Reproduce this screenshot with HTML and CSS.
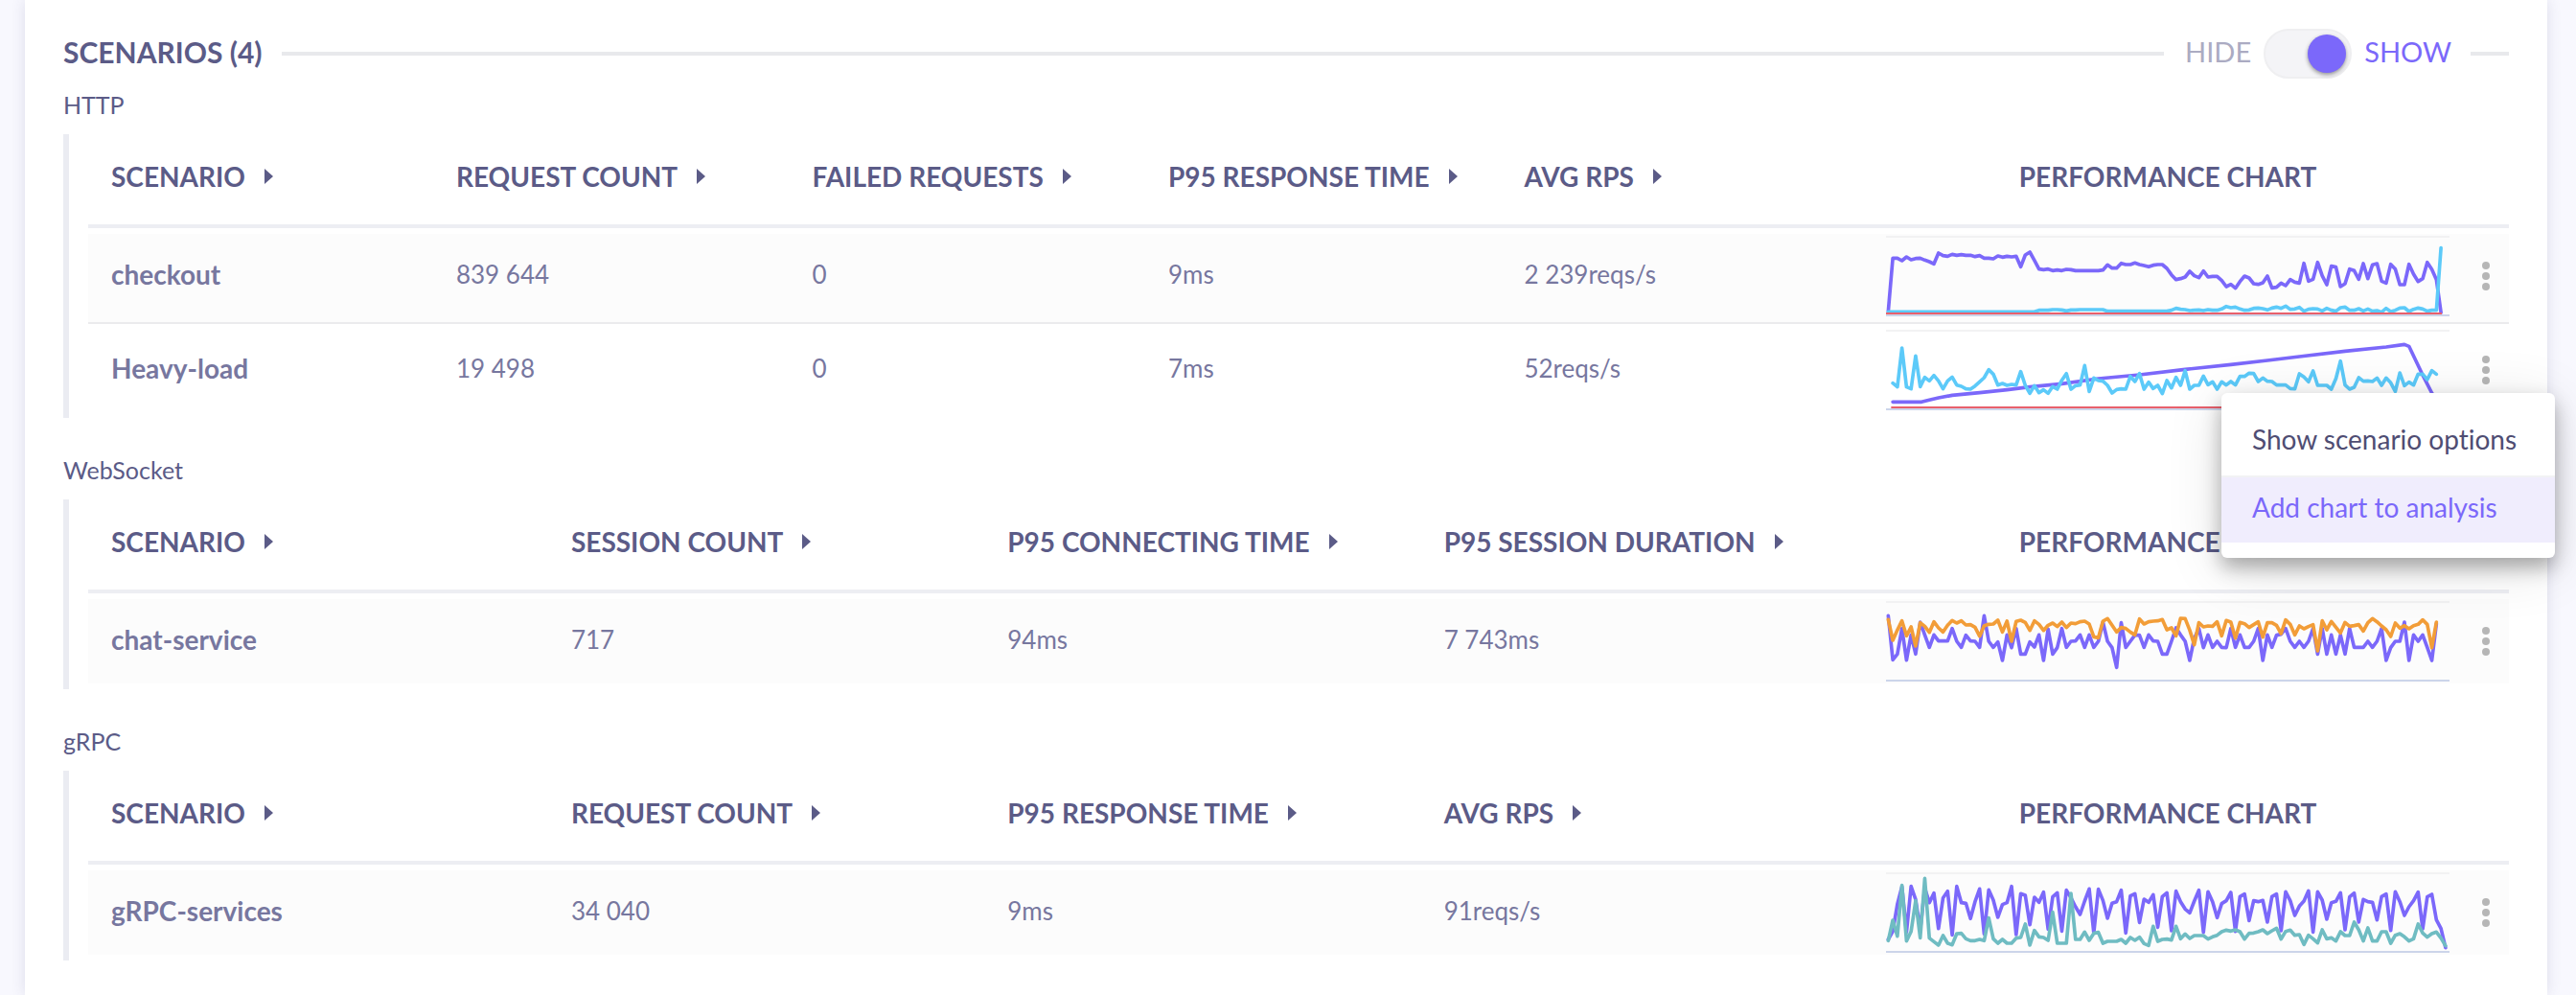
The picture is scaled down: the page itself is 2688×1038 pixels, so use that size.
FILE: index.html
```html
<!DOCTYPE html>
<html lang="en">
<head>
<meta charset="utf-8">
<title>Scenarios</title>
<link rel="stylesheet" href="styles.css">
</head>
<body>
<main class="panel">
  <header class="panel-head">
    <h1 class="panel-title">SCENARIOS (4)</h1>
    <span class="rule rule-grow"></span>
    <label class="switch">
      <span class="switch-text switch-off">HIDE</span>
      <input class="switch-input" type="checkbox" role="switch" checked>
      <span class="switch-text switch-on">SHOW</span>
    </label>
    <span class="rule rule-end"></span>
  </header>

  <section class="group">
    <h2 class="group-title">HTTP</h2>
    <div class="group-body">
      <table class="grid grid-five">
        <thead>
          <tr>
            <th class="col-name"><button class="sort" type="button">SCENARIO</button></th>
            <th><button class="sort" type="button">REQUEST COUNT</button></th>
            <th><button class="sort" type="button">FAILED REQUESTS</button></th>
            <th><button class="sort" type="button">P95 RESPONSE TIME</button></th>
            <th><button class="sort" type="button">AVG RPS</button></th>
            <th class="col-chart">PERFORMANCE CHART</th>
            <th class="col-more"></th>
          </tr>
        </thead>
        <tbody>
          <tr>
            <td class="name">checkout</td>
            <td>839 644</td>
            <td>0</td>
            <td>9ms</td>
            <td>2 239reqs/s</td>
            <td class="chart-cell"><svg class="chart" data-chart="checkout" viewBox="0 0 1764 264" role="img" aria-label="checkout performance"></svg></td>
            <td class="more-cell">
              <button class="more" type="button" aria-label="checkout actions"><svg width="10" height="32" viewBox="0 0 10 32"><circle cx="5" cy="5" r="4"/><circle cx="5" cy="16" r="4"/><circle cx="5" cy="27" r="4"/></svg></button>
            </td>
          </tr>
          <tr>
            <td class="name">Heavy-load</td>
            <td>19 498</td>
            <td>0</td>
            <td>7ms</td>
            <td>52reqs/s</td>
            <td class="chart-cell"><svg class="chart" data-chart="heavy" viewBox="0 0 1764 264" role="img" aria-label="Heavy-load performance"></svg></td>
            <td class="more-cell">
              <button class="more" type="button" aria-label="Heavy-load actions"><svg width="10" height="32" viewBox="0 0 10 32"><circle cx="5" cy="5" r="4"/><circle cx="5" cy="16" r="4"/><circle cx="5" cy="27" r="4"/></svg></button>
              <div class="menu" role="menu">
                <button class="menu-item" type="button" role="menuitem">Show scenario options</button>
                <button class="menu-item menu-item-active" type="button" role="menuitem">Add chart to analysis</button>
              </div>
            </td>
          </tr>
        </tbody>
      </table>
    </div>
  </section>

  <section class="group">
    <h2 class="group-title">WebSocket</h2>
    <div class="group-body">
      <table class="grid">
        <thead>
          <tr>
            <th class="col-name"><button class="sort" type="button">SCENARIO</button></th>
            <th><button class="sort" type="button">SESSION COUNT</button></th>
            <th><button class="sort" type="button">P95 CONNECTING TIME</button></th>
            <th><button class="sort" type="button">P95 SESSION DURATION</button></th>
            <th class="col-chart">PERFORMANCE CHART</th>
            <th class="col-more"></th>
          </tr>
        </thead>
        <tbody>
          <tr>
            <td class="name">chat-service</td>
            <td>717</td>
            <td>94ms</td>
            <td>7 743ms</td>
            <td class="chart-cell"><svg class="chart" data-chart="chat" viewBox="0 0 1764 264" role="img" aria-label="chat-service performance"></svg></td>
            <td class="more-cell">
              <button class="more" type="button" aria-label="chat-service actions"><svg width="10" height="32" viewBox="0 0 10 32"><circle cx="5" cy="5" r="4"/><circle cx="5" cy="16" r="4"/><circle cx="5" cy="27" r="4"/></svg></button>
            </td>
          </tr>
        </tbody>
      </table>
    </div>
  </section>

  <section class="group">
    <h2 class="group-title">gRPC</h2>
    <div class="group-body">
      <table class="grid">
        <thead>
          <tr>
            <th class="col-name"><button class="sort" type="button">SCENARIO</button></th>
            <th><button class="sort" type="button">REQUEST COUNT</button></th>
            <th><button class="sort" type="button">P95 RESPONSE TIME</button></th>
            <th><button class="sort" type="button">AVG RPS</button></th>
            <th class="col-chart">PERFORMANCE CHART</th>
            <th class="col-more"></th>
          </tr>
        </thead>
        <tbody>
          <tr>
            <td class="name">gRPC-services</td>
            <td>34 040</td>
            <td>9ms</td>
            <td>91reqs/s</td>
            <td class="chart-cell"><svg class="chart" data-chart="grpc" viewBox="0 0 1764 264" role="img" aria-label="gRPC-services performance"></svg></td>
            <td class="more-cell">
              <button class="more" type="button" aria-label="gRPC-services actions"><svg width="10" height="32" viewBox="0 0 10 32"><circle cx="5" cy="5" r="4"/><circle cx="5" cy="16" r="4"/><circle cx="5" cy="27" r="4"/></svg></button>
            </td>
          </tr>
        </tbody>
      </table>
    </div>
  </section>
</main>
<script src="charts.js"></script>
</body>
</html>
```
FILE: styles.css
```css
* {
  box-sizing: border-box;
}

body {
  margin: 0;
  padding: 0 30px 0 26px;
  background: #f8f8fe;
  color: #5b5b87;
  font-family: Lato, "Open Sans", sans-serif;
  font-size: 26px;
  font-variant-ligatures: none;
  line-height: 32px;
}

button {
  margin: 0;
  padding: 0;
  border: 0;
  background: none;
  color: inherit;
  font: inherit;
  font-variant-ligatures: none;
  cursor: pointer;
}

.panel {
  min-height: 100vh;
  padding: 30px 40px 36px;
  background: #fff;
  box-shadow: 0 0 14px rgba(60, 60, 110, 0.14);
}

.panel-head {
  display: flex;
  align-items: center;
}

.panel-title {
  margin: 0;
  padding-bottom: 4px;
  font-size: 30px;
  font-weight: 700;
}

.rule {
  height: 4px;
  background: #e8e9ec;
}

.rule-grow {
  flex: 1;
  margin: 0 22px 0 20px;
}

.rule-end {
  width: 40px;
  margin-left: 20px;
}

.switch {
  display: flex;
  align-items: center;
  gap: 13px;
  font-size: 29px;
  cursor: pointer;
}

.switch-text {
  padding-bottom: 4px;
}

.switch-off {
  color: #ababc2;
}

.switch-on {
  color: #7b68fa;
}

.switch-input {
  appearance: none;
  display: flex;
  align-items: center;
  justify-content: flex-end;
  width: 92px;
  height: 52px;
  margin: 0;
  padding: 0 4px;
  border: 2px solid #efeff1;
  border-radius: 26px;
  background: #f4f4f7;
}

.switch-input::before {
  content: "";
  width: 40px;
  height: 40px;
  border-radius: 50%;
  background: #7b68fa;
  box-shadow: 0 2px 4px rgba(0, 0, 0, 0.4);
}

.group {
  margin-top: 38px;
}

.panel-head + .group {
  margin-top: 11px;
}

.group-title {
  margin: 0 0 15px;
  font-size: 25px;
  font-weight: 400;
}

.group-body {
  padding: 0 0 6px 20px;
  border-left: 6px solid #ebecf2;
}

.grid {
  width: 100%;
  table-layout: fixed;
  border-collapse: separate;
  border-spacing: 0;
}

.grid th {
  height: 98px;
  padding: 28px 0 0 24px;
  border-bottom: 4px solid #edeef3;
  font-size: 28px;
  font-weight: 700;
  text-align: left;
  vertical-align: top;
  white-space: nowrap;
}

.grid .col-name {
  width: 19%;
}

.grid-five .col-name {
  width: 14.25%;
}

.grid .col-chart {
  width: 618px;
  padding-left: 30px;
  text-align: center;
}

.grid .col-more {
  width: 62px;
}

.sort {
  display: inline-flex;
  align-items: center;
  gap: 20px;
}

.sort::after {
  content: "";
  border: 8px solid transparent;
  border-right: 0;
  border-left: 9px solid #5b5b87;
}

.grid td {
  height: 94px;
  padding: 26px 0 0 24px;
  border-top: 6px solid #fff;
  background: #fcfcfc;
  color: #77779f;
  vertical-align: top;
}

.grid tr:not(:last-child) td {
  height: 100px;
  border-bottom: 2px solid #ebebed;
}

.grid tr + tr td {
  height: 92px;
  border-top-width: 4px;
  background: #fff;
}

.grid .name {
  font-size: 28px;
  font-weight: 700;
}

.grid .chart-cell {
  padding: 0 0 0 30px;
}

.chart {
  display: block;
  width: 588px;
  height: 88px;
}

.chart polyline {
  fill: none;
  stroke-width: 11;
  stroke-linecap: round;
  stroke-linejoin: round;
}

.grid .more-cell {
  position: relative;
  padding: 28px 0 0 33px;
}

.more {
  display: block;
}

.more svg {
  display: block;
  fill: #b6b6b6;
}

.menu {
  position: absolute;
  z-index: 1;
  top: 68px;
  right: -48px;
  width: 348px;
  padding: 16px 0;
  border-radius: 6px;
  background: #fff;
  box-shadow: 0 10px 20px rgba(0, 0, 0, 0.3), 0 10px 60px rgba(0, 0, 0, 0.12);
}

.menu-item {
  display: block;
  width: 100%;
  height: 70px;
  padding: 0 0 6px 32px;
  color: #4f4d73;
  font-size: 28px;
  text-align: left;
  white-space: nowrap;
}

.menu-item-active {
  border-top: 2px solid #f2f2f4;
  background: #f0edfd;
  color: #7b68fa;
}
```
FILE: charts.js
```js
// Each line has its samples at a constant step; a [index, y] pair places a sparse sample.
const STEP = 14.3;
const START = 7;

const charts = {
  checkout: {
    top: 42, errors: [0, 1740],
    lines: [
      { color: "#7b68fa", first: 0, values: [285,118,118,126,114,123,119,118,124,129,136,102,110,112,106,109,107,109,109,113,110,118,118,120,111,115,112,114,112,145,108,99,125,152,154,152,157,155,157,153,154,157,157,157,157,157,157,155,139,149,149,134,138,138,133,138,141,145,140,138,138,150,170,185,182,177,159,173,179,158,177,175,175,188,207,200,212,191,174,180,198,200,195,174,211,209,196,204,185,193,196,134,190,184,131,173,201,143,146,207,198,152,157,184,135,182,139,135,190,196,137,152,201,201,137,168,191,182,131,153,185,288] },
      { color: "#5ccaf9", first: 0, values: [286,[32,286],281,281,281,279,279,280,283,280,280,279,279,279,279,279,279,284,284,[61,284],281,275,278,279,282,281,280,282,279,281,281,277,269,273,271,277,281,280,275,274,276,280,274,271,275,268,278,277,272,284,278,276,277,283,275,281,284,273,271,281,281,276,283,277,284,282,287,275,285,281,274,273,285,278,274,277,284,281,281,86] }
    ]
  },
  heavy: {
    top: 336, errors: [16, 1740],
    lines: [
      { color: "#7b68fa", first: 1, values: [[1,568],[7.3,568],[9,562],[11,555],[14,547],[20,539],[26,530],[31,521],[38,511],[46,495],[55,483],[65,466],[75,451],[83,438],[90,426],[100,409],[109,396],[113,388],[114,394],[116.8,478],[119,540],[120,566]] },
      { color: "#5ccaf9", first: 1, values: [509,521,399,521,527,424,520,491,502,485,502,527,502,490,515,519,527,528,518,505,492,467,481,515,510,516,513,515,473,516,541,517,539,530,541,520,528,500,479,528,517,515,454,535,493,501,503,516,540,529,527,528,488,504,479,528,506,526,516,542,501,524,491,516,470,528,516,516,487,514,505,528,505,515,504,515,488,488,478,479,504,493,503,504,515,515,515,526,527,480,490,505,471,516,516,516,528,495,440,515,528,522,492,503,502,504,493,516,493,508,535,477,517,506,515,481,481,498,470,481] }
    ]
  },
  chat: {
    top: 18,
    lines: [
      { color: "#7b68fa", first: 0, values: [70,208,190,110,209,130,190,90,130,169,130,149,149,149,110,150,169,131,149,150,169,70,150,169,152,210,130,170,110,190,190,152,168,130,210,112,190,170,110,169,150,149,130,169,130,169,150,90,150,170,232,92,169,150,131,131,169,130,149,150,190,190,150,108,130,150,210,140,110,170,130,169,150,169,170,110,169,130,169,169,150,110,210,130,169,131,128,110,150,169,150,169,150,110,190,110,190,130,190,130,190,110,169,169,169,150,169,150,110,210,170,150,150,90,210,130,150,130,169,210,95] },
      { color: "#f29d38", first: 0, values: [82,147,115,86,133,105,165,92,103,122,89,108,121,100,85,93,86,99,98,106,134,101,97,96,84,121,87,150,88,84,91,116,86,97,116,100,93,104,90,107,93,95,89,87,96,136,139,87,79,100,121,107,110,121,130,80,96,89,87,86,82,114,108,133,78,79,115,161,92,105,102,103,89,133,85,90,140,91,95,107,98,89,137,92,92,100,126,83,97,130,102,111,104,98,180,86,114,88,106,124,91,103,101,98,118,92,79,89,102,114,135,93,109,101,111,101,97,83,97,170,90] }
    ]
  },
  grpc: {
    top: 54,
    lines: [
      { color: "#7b68fa", first: 0, values: [270,245,160,105,247,104,145,240,110,155,125,236,140,119,256,104,155,157,205,152,112,253,115,147,201,161,155,104,255,127,132,224,138,154,122,238,137,124,244,116,140,168,192,150,112,250,113,148,204,157,152,116,250,134,127,217,144,154,130,232,136,124,243,119,152,175,187,150,116,248,121,152,202,158,149,123,245,136,128,211,149,152,148,216,136,128,243,121,149,195,166,150,118,247,121,147,207,155,151,124,240,137,125,216,145,152,154,209,136,128,242,121,152,195,168,149,122,237,137,129,209,236,296] },
      { color: "#6fbcc2", first: 0, values: [274,210,260,101,275,245,149,265,79,266,277,288,258,282,287,252,251,268,274,274,270,274,203,268,282,270,282,282,266,264,222,288,242,262,264,273,185,282,282,282,126,270,270,247,273,251,248,282,276,276,276,270,282,264,273,263,283,289,229,276,270,269,272,229,268,253,267,258,258,258,269,262,257,246,241,244,240,246,269,251,250,246,240,252,243,235,269,245,241,257,255,286,257,268,281,240,268,265,275,246,258,258,216,240,275,234,275,275,246,246,282,257,252,262,275,268,222,250,263,252,247,266,290] }
    ]
  }
};

function add(svg, tag, attributes) {
  const node = document.createElementNS("http://www.w3.org/2000/svg", tag);
  for (const [key, value] of Object.entries(attributes)) node.setAttribute(key, value);
  svg.append(node);
}

for (const svg of document.querySelectorAll("[data-chart]")) {
  const chart = charts[svg.dataset.chart];
  add(svg, "rect", { x: 0, y: 6, width: 1764, height: 6, fill: "#f2f2f3" });
  add(svg, "rect", { x: 0, y: 252, width: 1764, height: 6, fill: "#ccd5ea" });
  for (const line of chart.lines) {
    let index = line.first;
    const points = line.values.map((value) => {
      let y = value;
      if (Array.isArray(value)) [index, y] = value;
      const point = `${(START + index * STEP).toFixed(1)},${y - chart.top}`;
      index += 1;
      return point;
    });
    add(svg, "polyline", { points: points.join(" "), stroke: line.color });
  }
  if (chart.errors) {
    const [from, to] = chart.errors;
    add(svg, "rect", { x: from, y: 246, width: to - from, height: 6, fill: "#e8606c" });
  }
}
```
